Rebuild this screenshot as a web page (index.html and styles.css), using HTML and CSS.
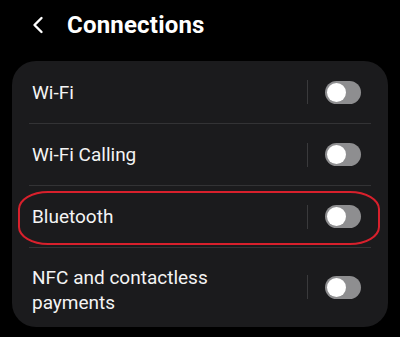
FILE: index.html
```html
<!DOCTYPE html>
<html>
<head>
<meta charset="utf-8">
<link rel="stylesheet" href="styles.css">
</head>
<body>
<header class="header">
  <svg class="back" width="12" height="18" viewBox="0 0 12 18"><path d="M9.5 2 L2.5 9 L9.5 16" fill="none" stroke="#fff" stroke-width="2.4" stroke-linecap="round" stroke-linejoin="round"/></svg>
  <h1 class="title">Connections</h1>
</header>
<main class="card">
  <div class="row"><span class="label">Wi-Fi</span><span class="vdiv"></span><span class="toggle"><span class="knob"></span></span></div>
  <div class="row"><span class="label">Wi-Fi Calling</span><span class="vdiv"></span><span class="toggle"><span class="knob"></span></span></div>
  <div class="row"><span class="label">Bluetooth</span><span class="vdiv"></span><span class="toggle"><span class="knob"></span></span></div>
  <div class="row tall"><span class="label">NFC and contactless<br>payments</span><span class="vdiv"></span><span class="toggle"><span class="knob"></span></span></div>
  <div class="highlight"></div>
</main>
</body>
</html>
```
FILE: styles.css
```css
html, body {
  margin: 0;
  padding: 0;
  background: #000;
  font-family: Roboto, "Noto Sans", sans-serif;
  color: #f2f2f2;
}
.header {
  height: 61px;
  display: flex;
  align-items: flex-start;
  padding-left: 32px;
  box-sizing: border-box;
}
.back {
  margin-top: 16px;
}
.title {
  margin: 10px 0 0 23px;
  font-size: 24px;
  font-weight: 700;
  line-height: 30px;
  color: #fff;
  letter-spacing: 0.2px;
}
.card {
  position: relative;
  margin: 0 12px;
  background: #1b1b1d;
  border-radius: 24px;
  height: 266px;
  box-sizing: border-box;
}
.row {
  display: flex;
  align-items: center;
  height: 62px;
  margin: 0 17px;
  padding: 0 10px 0 3px;
  box-sizing: border-box;
}
.row + .row {
  border-top: 1px solid #333335;
}
.row.tall {
  height: 79px;
  padding-top: 6px;
}
.label {
  flex: 1;
  font-size: 19px;
  line-height: 25px;
  color: #f4f4f4;
}
.vdiv {
  width: 1px;
  height: 24px;
  background: #3a3a3c;
  margin-right: 17px;
}
.row.tall .vdiv,
.row.tall .toggle {
  margin-bottom: 6px;
}
.toggle {
  width: 36px;
  height: 23px;
  border-radius: 12px;
  background: #8e8e90;
  display: flex;
  align-items: center;
  padding-left: 2px;
  box-sizing: border-box;
}
.knob {
  width: 19px;
  height: 19px;
  border-radius: 50%;
  background: #fff;
}
.highlight {
  position: absolute;
  left: 6px;
  top: 130px;
  width: 362px;
  height: 54px;
  border: 2px solid #d8202c;
  border-radius: 30px / 18px;
  box-sizing: border-box;
  pointer-events: none;
}
```
